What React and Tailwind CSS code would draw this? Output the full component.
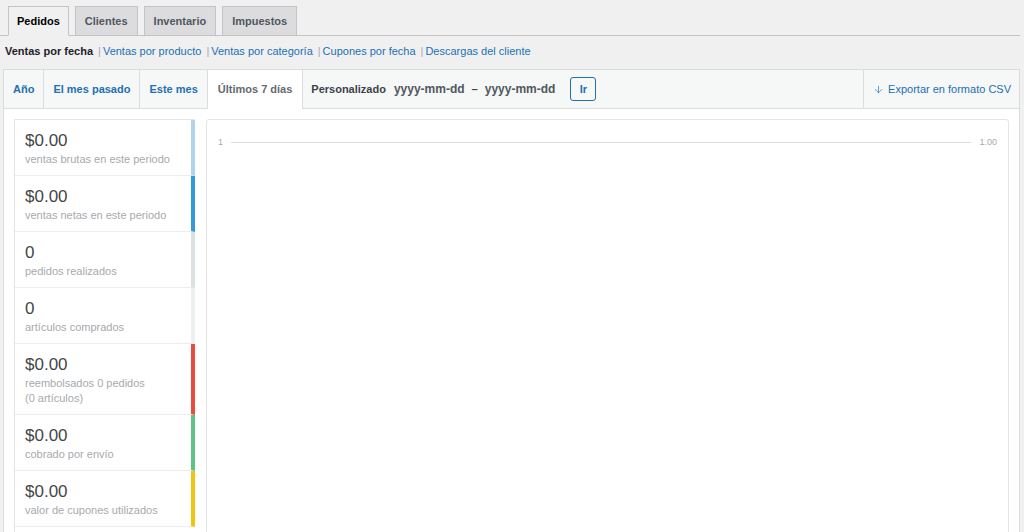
import React from "react";
import { ArrowDown } from "lucide-react";

const tabs = ["Pedidos", "Clientes", "Inventario", "Impuestos"];

const reports = [
  "Ventas por producto",
  "Ventas por categoría",
  "Cupones por fecha",
  "Descargas del cliente",
];

const ranges = ["Año", "El mes pasado", "Este mes"];

const legend = [
  { amount: "$0.00", label: "ventas brutas en este periodo", color: "border-r-[#b1d4ea]" },
  { amount: "$0.00", label: "ventas netas en este periodo", color: "border-r-[#3498db]" },
  { amount: "0", label: "pedidos realizados", color: "border-r-[#dbe1e3]" },
  { amount: "0", label: "artículos comprados", color: "border-r-[#ecf0f1]" },
  { amount: "$0.00", label: "reembolsados 0 pedidos", extra: "(0 artículos)", color: "border-r-[#e74c3c]" },
  { amount: "$0.00", label: "cobrado por envío", color: "border-r-[#5cc488]" },
  { amount: "$0.00", label: "valor de cupones utilizados", color: "border-r-[#f1c40f]" },
];

const App = () => {
  return (
    <div className="min-h-[532px] bg-[#f0f0f1] font-['Liberation_Sans',Arial,sans-serif] text-[#3c434a] overflow-hidden">
      {/* top tabs */}
      <div className="flex items-end gap-[6px] pl-[8px] pt-[6px] border-b border-[#c3c4c7] mr-[4px]">
        {tabs.map((tab, i) => (
          <div
            key={tab}
            className={
              i === 0
                ? "h-[30px] -mb-px px-[8px] flex items-center border border-[#c3c4c7] border-b-[#f0f0f1] bg-[#f0f0f1] text-[11px] font-bold text-black"
                : "h-[29px] px-[9px] flex items-center border border-[#c3c4c7] border-b-0 bg-[#dcdcde] text-[11px] font-bold text-[#50575e]"
            }
          >
            {tab}
          </div>
        ))}
      </div>

      {/* sub links */}
      <div className="flex items-center h-[30px] pl-[5px] text-[11px]">
        <span className="font-bold text-[#1d2327]">Ventas por fecha</span>
        {reports.map((r) => (
          <span key={r} className="flex items-center">
            <span className="text-[#a7aaad] ml-[5px] mr-[2px]">|</span>
            <span className="text-[#2271b1]">{r}</span>
          </span>
        ))}
      </div>

      {/* postbox */}
      <div className="ml-[3px] mr-[4px] mt-[3px] border border-[#dcdcde] bg-white">
        <div className="flex h-[39px] bg-[#f6f7f7] border-b border-[#dcdcde]">
          {ranges.map((r) => (
            <div
              key={r}
              className="flex items-center px-[9px] border-r border-[#dcdcde] text-[11px] font-bold text-[#2271b1]"
            >
              {r}
            </div>
          ))}
          <div className="flex items-center px-[10px] -mb-px bg-white text-[11px] font-bold text-[#646970]">
            Últimos 7 días
          </div>
          <div className="flex items-center pl-[8px] border-l border-[#dcdcde] text-[11px] font-bold text-[#3c434a]">
            <span>Personalizado</span>
            <span className="ml-[8px] text-[12px] text-[#50575e]">yyyy-mm-dd</span>
            <span className="ml-[7px]">–</span>
            <span className="ml-[7px] text-[12px] text-[#50575e]">yyyy-mm-dd</span>
            <span className="ml-[15px] w-[26px] h-[24px] flex items-center justify-center border border-[#2271b1] rounded-[3px] text-[#2271b1] bg-[#f6f7f7] text-[11px]">
              Ir
            </span>
          </div>
          <div className="ml-auto flex items-center pl-[9px] pr-[8px] border-l border-[#dcdcde] text-[11px] text-[#2271b1]">
            <ArrowDown size={11} strokeWidth={1.5} className="mr-[4px]" />
            <span>Exportar en formato CSV</span>
          </div>
        </div>

        <div className="flex gap-[11px] pl-[10px] pr-[10px] pt-[10px] pb-[10px]">
          <div className="w-[181px] shrink-0 border-l border-t border-[#e5e5e5] bg-white">
            {legend.map((item, i) => (
              <div
                key={i}
                className={`border-b border-r-4 border-b-[#ececec] ${item.color} pl-[10px] pt-[10px] pb-[8px]`}
              >
                <div className="text-[17px] leading-[22px] text-[#464646]">{item.amount}</div>
                <div className="text-[11px] leading-[15px] text-[#a7aaad]">{item.label}</div>
                {item.extra && (
                  <div className="text-[11px] leading-[15px] text-[#a7aaad]">{item.extra}</div>
                )}
              </div>
            ))}
          </div>

          <div className="flex-1 h-[440px] border border-[#e5e5e5] rounded-[3px] bg-white">
            <div className="flex items-center pl-[11px] pr-[11px] pt-[16px] text-[9px] text-[#a7aaad]">
              <span>1</span>
              <div className="flex-1 mx-[8px] h-px bg-[#dcdcde]"></div>
              <span>1.00</span>
            </div>
          </div>
        </div>
      </div>
    </div>
  );
};

export default App;
